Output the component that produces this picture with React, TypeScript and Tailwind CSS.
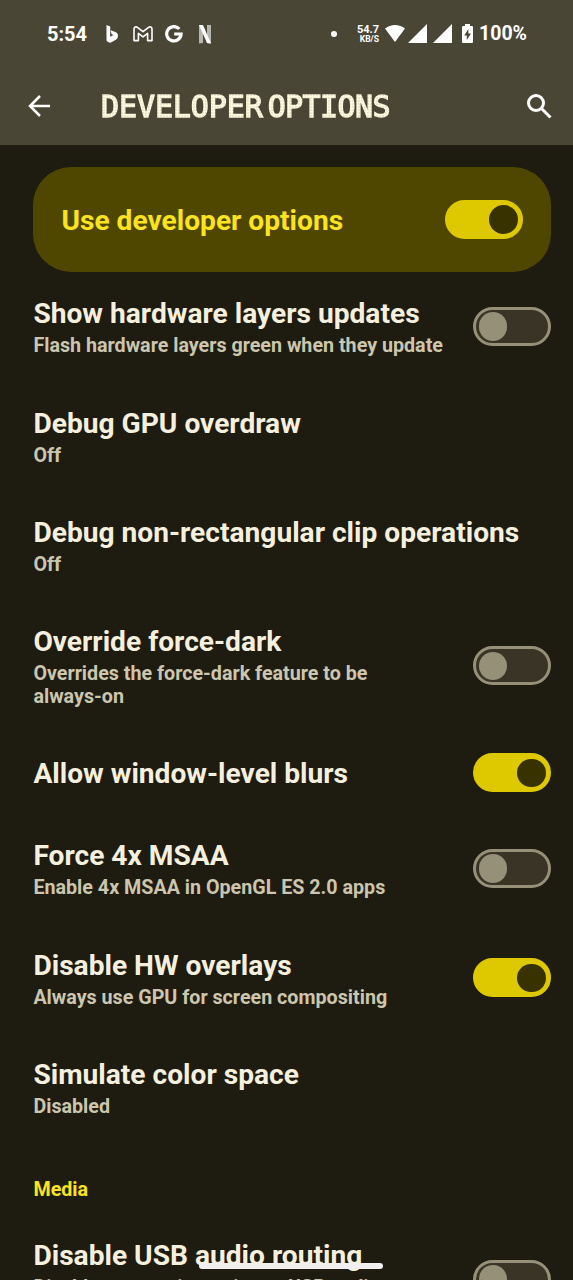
import { useState } from "react";
import type { ReactNode } from "react";

interface Option {
  key: string;
  label: string;
  summary?: ReactNode;
  toggle?: boolean;
  height: string;
}

const OPTIONS: Option[] = [
  {
    key: "layers",
    label: "Show hardware layers updates",
    summary: "Flash hardware layers green when they update",
    toggle: false,
    height: "h-[109.4px]",
  },
  { key: "overdraw", label: "Debug GPU overdraw", summary: "Off", height: "h-[109.4px]" },
  { key: "clip", label: "Debug non-rectangular clip operations", summary: "Off", height: "h-[109.4px]" },
  {
    key: "dark",
    label: "Override force-dark",
    summary: (
      <>
        Overrides the force-dark feature to be <span className="whitespace-nowrap">always-on</span>
      </>
    ),
    toggle: false,
    height: "h-[131.6px]",
  },
  { key: "blurs", label: "Allow window-level blurs", toggle: true, height: "h-[82px]" },
  {
    key: "msaa",
    label: "Force 4x MSAA",
    summary: "Enable 4x MSAA in OpenGL ES 2.0 apps",
    toggle: false,
    height: "h-[109.4px]",
  },
  {
    key: "overlays",
    label: "Disable HW overlays",
    summary: "Always use GPU for screen compositing",
    toggle: true,
    height: "h-[109.4px]",
  },
  { key: "color", label: "Simulate color space", summary: "Disabled", height: "h-[109.4px]" },
];

const MEDIA_OPTIONS: Option[] = [
  {
    key: "usb",
    label: "Disable USB audio routing",
    summary: "Disable automatic routing to USB audio peripherals",
    toggle: false,
    height: "h-[132px]",
  },
];

export default function App() {
  return (
    <div className="relative h-[1280px] w-[573px] overflow-hidden bg-[#1e1b10] font-['Roboto',sans-serif]">
      <header className="h-[145px] bg-[#4a4635]">
        <StatusBar />
        <TitleBar />
      </header>

      <main className="pt-[22px] pr-[22px] pl-[33.4px]">
        <div className="flex h-[105px] items-center justify-between rounded-[38px] bg-[#4f4700] pr-7 pl-7">
          <span className="pt-[2px] text-[28.15px] leading-[33px] font-bold whitespace-nowrap text-[#fbe31e]">
            Use developer options
          </span>
          <Switch initial />
        </div>

        {OPTIONS.map((option) => (
          <OptionRow key={option.key} option={option} />
        ))}

        <h2 className="h-[71.5px] pt-[36px] text-[19.7px] leading-[23px] font-bold text-[#fbe31e]">Media</h2>

        {MEDIA_OPTIONS.map((option) => (
          <OptionRow key={option.key} option={option} />
        ))}
      </main>

      <div className="absolute top-[1263px] left-[199px] h-[6px] w-[184px] rounded-full bg-[#f1eff0]" />
    </div>
  );
}

function StatusBar() {
  return (
    <div className="flex h-[67px] items-center pl-[47px] text-white">
      <span className="w-[58px] text-[20px] leading-6 font-bold">5:54</span>
      <svg viewBox="0 0 14 18" className="h-[18px] w-[14px]" fill="currentColor">
        <path d="M1.5 0l3.7 1.4v10.3l3.3-1.8-1.9-1-1.2-3.6 5 1.8c1.8.7 2.6 2 2.6 3.7 0 1.8-.8 3-2.2 3.9l-4.3 2.6c-1.1.6-2 .5-3-.1l-1.1-.7c-.7-.5-.9-1-.9-1.8z" />
      </svg>
      <svg
        viewBox="0 0 20 16"
        className="ml-[14px] h-[16px] w-[20px]"
        fill="none"
        stroke="currentColor"
        strokeWidth="1.6"
        strokeLinejoin="round"
      >
        <path d="M1 3.2C1 .8 3.1.4 4.4 1.4L10 5.7l5.6-4.3C16.9.4 19 .8 19 3.2V14.6h-4.4V7.4L10 10.9 5.4 7.4v7.2H1z" />
      </svg>
      <svg
        viewBox="0 0 18 18"
        className="ml-[12px] h-[18px] w-[18px]"
        fill="none"
        stroke="currentColor"
        strokeWidth="3.2"
      >
        <path d="M14.3 4A7.2 7.2 0 1 0 16.1 9H9.2" />
      </svg>
      <svg viewBox="0 0 12 20" className="ml-[16px] h-[20px] w-[12px]" fill="currentColor">
        <path d="M0 1h4v18l-4 .4zM8 1h4v18.4L8 19z" opacity="0.6" />
        <path d="M0 1h4l8 18.4L8 19z" />
      </svg>
      <span className="ml-[120px] size-[6px] rounded-full bg-white" />
      <div className="ml-[18px] w-[24px] text-right font-bold">
        <div className="text-[11px] leading-[11px]">54.7</div>
        <div className="text-[8.5px] leading-[9px]">KB/S</div>
      </div>
      <svg viewBox="0 0 20 17" className="ml-[6px] h-[17px] w-[20px]" fill="currentColor">
        <path d="M0 3.6a16 16 0 0 1 20 0L10 17z" />
      </svg>
      <Signal className="ml-[3px]" />
      <Signal className="ml-[6px]" />
      <svg viewBox="0 0 11 19" className="ml-[10px] h-[19px] w-[11px]" fill="currentColor">
        <path
          fillRule="evenodd"
          d="M3 0h5v2h2a1 1 0 0 1 1 1v15a1 1 0 0 1-1 1H1a1 1 0 0 1-1-1V3a1 1 0 0 1 1-1h2zM6.4 5L2.2 11.5h2.6V16L9 9.5H6.4z"
        />
      </svg>
      <span className="ml-[6px] text-[19.5px] leading-6 font-bold">100%</span>
    </div>
  );
}

function Signal({ className }: { className: string }) {
  return (
    <svg viewBox="0 0 19 19" className={`h-[19px] w-[19px] shrink-0 ${className}`} fill="currentColor">
      <path d="M19 0v19H0z" />
    </svg>
  );
}

function TitleBar() {
  return (
    <div className="flex h-[78px] items-center pr-[21px] pl-7 text-white">
      <svg viewBox="0 0 22 22" className="h-[22px] w-[22px]" fill="none" stroke="currentColor" strokeWidth="2.5">
        <path d="M22 11H2M12 1L2 11l10 10" />
      </svg>
      <h1 className="mt-[2px] ml-[51px] flex-1 bg-[radial-gradient(circle,#fffae0_50%,#c9c4aa_100%)] bg-[length:3px_3px] bg-clip-text font-['DejaVu_Sans_Mono',monospace] text-[30px] leading-9 whitespace-nowrap text-transparent [-webkit-text-stroke:1.4px_transparent]">
        <span className="tracking-[-0.1px]">DEVELOPER</span>
        <span className="inline-block w-[5px]"> </span>
        <span className="tracking-[-0.6px]">OPTIONS</span>
      </h1>
      <svg viewBox="0 0 25 25" className="h-[25px] w-[25px]" fill="none" stroke="currentColor" strokeWidth="3">
        <circle cx="9" cy="9" r="7.5" />
        <path d="M14.5 14.5L23.5 23.5" />
      </svg>
    </div>
  );
}

function OptionRow({ option }: { option: Option }) {
  return (
    <div className={`flex items-center justify-between ${option.height}`}>
      <div className={`pt-[1.6px] ${option.toggle === undefined ? "" : "w-[415px]"}`}>
        <div className="text-[28.15px] leading-[33px] font-bold whitespace-nowrap text-[#f5f0de]">
          {option.label}
        </div>
        {option.summary && (
          <p className="mt-[4px] text-[19.7px] leading-[23px] font-bold text-[#cbc6ad]">{option.summary}</p>
        )}
      </div>
      {option.toggle !== undefined && <Switch initial={option.toggle} />}
    </div>
  );
}

function Switch({ initial }: { initial: boolean }) {
  const [on, setOn] = useState(initial);

  return (
    <button
      type="button"
      role="switch"
      aria-checked={on}
      onClick={() => setOn((v) => !v)}
      className={`flex h-[39px] w-[78px] shrink-0 items-center rounded-full border-[3px] px-[2.5px] ${
        on ? "justify-end border-[#dec800] bg-[#dec800]" : "justify-start border-[#969078] bg-[#393426]"
      }`}
    >
      <span className={`size-[28.5px] rounded-full ${on ? "bg-[#383100]" : "bg-[#969078]"}`} />
    </button>
  );
}
